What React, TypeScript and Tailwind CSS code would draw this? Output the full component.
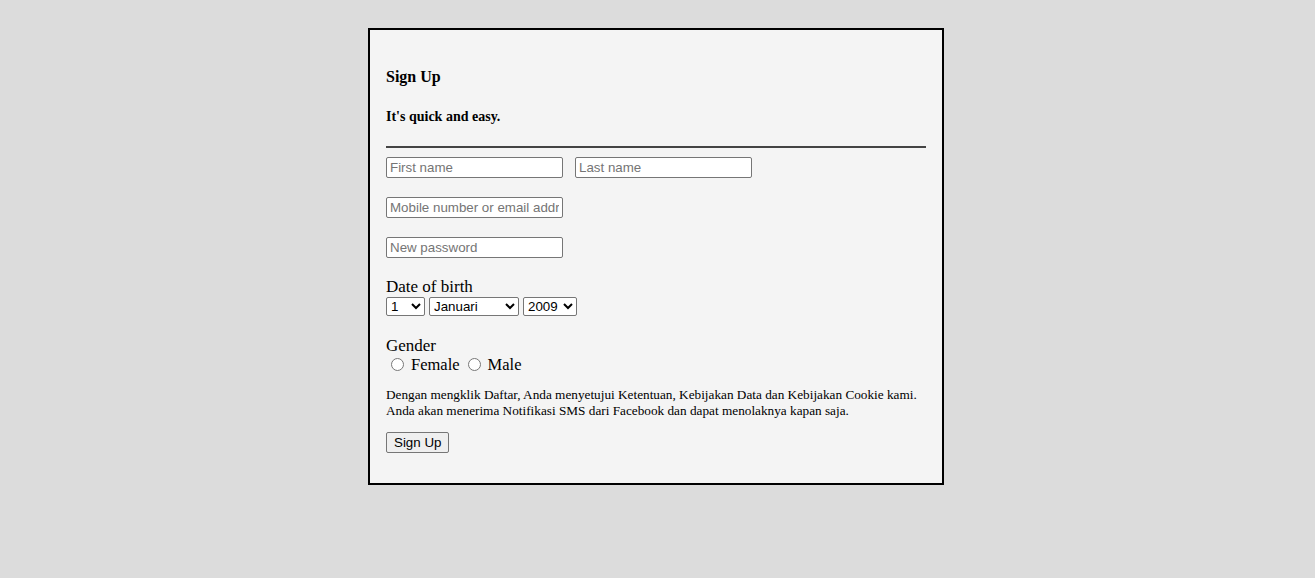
import React from "react";

const serif = { fontFamily: '"Liberation Serif", "DejaVu Serif", serif' };

export default function App() {
  const inputCls =
    "block w-[177px] h-[21px] border border-[#767676] rounded-[2px] bg-white px-[3px] text-[13.333px] text-black placeholder:text-[#757575] outline-none";
  const inputFont = { fontFamily: '"Liberation Sans", Arial, sans-serif' };
  const selectCls =
    "block h-[19px] border border-[#767676] rounded-[2px] bg-white text-[13.333px] text-black";
  const days = Array.from({ length: 31 }, (_, i) => i + 1);
  const months = ["Januari","Februari","Maret","April","Mei","Juni","Juli","Agustus","September","Oktober","November","Desember"];
  const years = Array.from({ length: 60 }, (_, i) => 2009 - i);
  return (
    <div className="w-[1315px] h-[578px] bg-[#dcdcdc] pt-[28px]" style={serif}>
      <div className="ml-[368px] w-[576px] h-[457px] border-2 border-black bg-[#f4f4f4] px-[16px] pt-[38px] text-black flex flex-col items-start">
        <h3 className="text-[16px] leading-[18px] font-bold">Sign Up</h3>
        <p className="mt-[23px] text-[14px] leading-[16px] font-bold">It's quick and easy.</p>
        <div className="mt-[21px] h-[2px] w-full bg-[#444]" />
        <div className="mt-[9px] flex gap-[12px]">
          <input className={inputCls} style={inputFont} placeholder="First name" />
          <input className={inputCls} style={inputFont} placeholder="Last name" />
        </div>
        <input className={`${inputCls} mt-[19px]`} style={inputFont} placeholder="Mobile number or email address" />
        <input className={`${inputCls} mt-[19px]`} style={inputFont} type="password" placeholder="New password" />
        <div className="mt-[19px] text-[17px] leading-[19px]">Date of birth</div>
        <div className="mt-[1px] flex gap-[4px]">
          <select className={`${selectCls} w-[39px]`} style={inputFont} defaultValue="1">
            {days.map((d) => (<option key={d} value={d}>{d}</option>))}
          </select>
          <select className={`${selectCls} w-[90px]`} style={inputFont} defaultValue="Januari">
            {months.map((m) => (<option key={m} value={m}>{m}</option>))}
          </select>
          <select className={`${selectCls} w-[54px]`} style={inputFont} defaultValue="2009">
            {years.map((y) => (<option key={y} value={y}>{y}</option>))}
          </select>
        </div>
        <div className="mt-[20px] text-[17px] leading-[19px]">Gender</div>
        <div className="flex items-center text-[16.5px] leading-[19px]">
          <input type="radio" name="g" className="ml-[5px] mr-[7px] w-[13px] h-[13px]" />
          <span>Female</span>
          <input type="radio" name="g" className="ml-[8px] mr-[7px] w-[13px] h-[13px]" />
          <span>Male</span>
        </div>
        <p className="mt-[13px] text-[13.25px] leading-[16px]">
          Dengan mengklik Daftar, Anda menyetujui Ketentuan, Kebijakan Data dan Kebijakan Cookie kami.
          <br />
          Anda akan menerima Notifikasi SMS dari Facebook dan dapat menolaknya kapan saja.
        </p>
        <button
          className="mt-[13px] h-[21px] px-[7px] border border-[#767676] rounded-[2px] bg-[#efefef] text-[13.333px] text-black"
          style={inputFont}
        >
          Sign Up
        </button>
      </div>
    </div>
  );
}
